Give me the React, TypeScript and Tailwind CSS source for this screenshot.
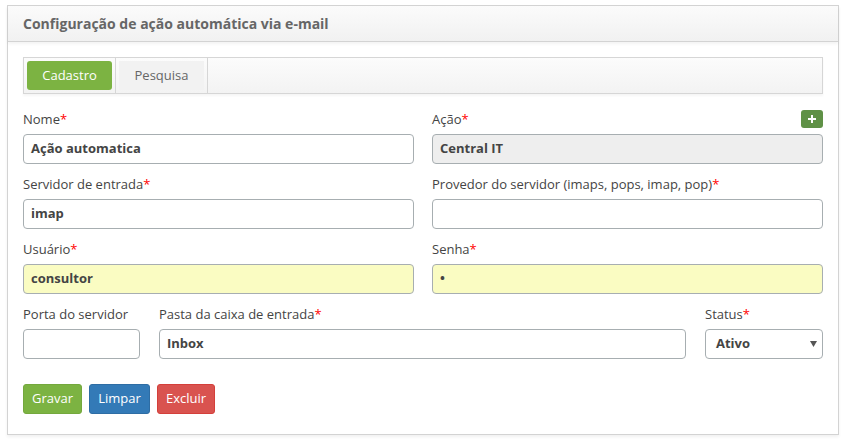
const Label = ({ text, required = true }: { text: string; required?: boolean }) => (
  <span className="h-[18px] leading-[18px] text-[13px] text-[#444]">
    {text}
    {required && <span className="text-[#f00]">*</span>}
  </span>
);

const Input = ({ value = "", tone = "white" }: { value?: string; tone?: "white" | "yellow" | "gray" }) => {
  const bg = tone === "yellow" ? "bg-[#fafcc2]" : tone === "gray" ? "bg-[#eeeeee]" : "bg-white";
  return (
    <div className={`h-[30px] rounded-[4px] border border-[#a7aeb1] px-[7px] flex items-center text-[13px] font-bold text-[#444] ${bg}`}>
      {value}
    </div>
  );
};

const Field = ({ label, value, tone, required = true }: { label: string; value?: string; tone?: "white" | "yellow" | "gray"; required?: boolean }) => (
  <div className="flex flex-col">
    <div className="mb-[6px] flex">
      <Label text={label} required={required} />
    </div>
    <Input value={value} tone={tone} />
  </div>
);

const App = () => {
  return (
    <div className="min-h-[441px] bg-white pl-[7px] pt-[5px]" style={{ fontFamily: '"Open Sans", "Liberation Sans", sans-serif' }}>
      <div className="w-[832px] h-[430px] border border-[#d3d3d3] bg-white shadow-[0_2px_3px_rgba(0,0,0,0.06)]">
        {/* cabeçalho */}
        <div className="h-[36px] border-b border-[#d3d3d3] bg-gradient-to-b from-[#fbfbfb] to-[#f1f1f1] pl-[15px] flex items-center shadow-[0_2px_3px_rgba(0,0,0,0.05)]">
          <h1 className="text-[14px] font-bold text-[#666]">Configuração de ação automática via e-mail</h1>
        </div>

        <div className="px-[15px] pt-[15px]">
          {/* abas */}
          <div className="h-[37px] border border-[#d6d6d6] bg-gradient-to-b from-[#fcfcfc] to-[#f3f3f3] flex items-stretch shadow-[0_2px_2px_rgba(0,0,0,0.04)]">
            <div className="flex items-center px-[3px] border-r border-[#d6d6d6]">
              <button className="h-[29px] w-[85px] rounded-[3px] bg-[#7cb342] text-white text-[13px]">Cadastro</button>
            </div>
            <div className="flex items-center px-[3px] border-r border-[#d6d6d6]">
              <div className="h-[29px] w-[85px] bg-[#f2f2f2] text-[#666] text-[13px] flex items-center justify-center">Pesquisa</div>
            </div>
          </div>

          {/* formulário */}
          <div className="mt-[16px] grid grid-cols-2 gap-x-[18px] gap-y-[11px]">
            <Field label="Nome" value="Ação automatica" />
            <div className="flex flex-col">
              <div className="mb-[6px] flex items-center justify-between">
                <Label text="Ação" />
                <button className="h-[18px] w-[22px] rounded-[3px] bg-[#5f9146] text-white flex items-center justify-center">
                  <svg width="10" height="10" viewBox="0 0 10 10">
                    <path d="M5 1v8M1 5h8" stroke="white" strokeWidth="2" />
                  </svg>
                </button>
              </div>
              <Input value="Central IT" tone="gray" />
            </div>
            <Field label="Servidor de entrada" value="imap" />
            <Field label="Provedor do servidor (imaps, pops, imap, pop)" />
            <Field label="Usuário" value="consultor" tone="yellow" />
            <Field label="Senha" value="•" tone="yellow" />
          </div>

          <div className="mt-[11px] flex gap-[19px]">
            <div className="w-[117px]">
              <Field label="Porta do servidor" required={false} />
            </div>
            <div className="flex-1">
              <Field label="Pasta da caixa de entrada" value="Inbox" />
            </div>
            <div className="w-[118px] flex flex-col">
              <div className="mb-[6px] flex">
                <Label text="Status" />
              </div>
              <div className="h-[30px] rounded-[4px] border border-[#a7aeb1] bg-white pl-[10px] pr-[5px] flex items-center justify-between text-[13px] font-bold text-[#444]">
                <span>Ativo</span>
                <svg width="7" height="6" viewBox="0 0 7 6">
                  <path d="M0 0h7L3.5 6z" fill="#555" />
                </svg>
              </div>
            </div>
          </div>

          {/* botões */}
          <div className="mt-[25px] flex gap-[7px]">
            <button className="h-[30px] w-[59px] rounded-[3px] bg-[#7cb342] border border-[#74a83d] text-white text-[13px]">Gravar</button>
            <button className="h-[30px] w-[61px] rounded-[3px] bg-[#337ab7] border border-[#2e6da4] text-white text-[13px]">Limpar</button>
            <button className="h-[30px] w-[58px] rounded-[3px] bg-[#d9534f] border border-[#d43f3a] text-white text-[13px]">Excluir</button>
          </div>
        </div>
      </div>
    </div>
  );
};

export default App;
